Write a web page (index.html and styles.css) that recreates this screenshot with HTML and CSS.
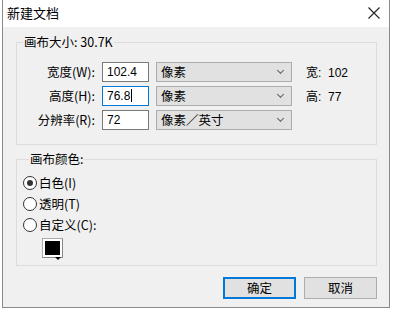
FILE: index.html
```html
<!DOCTYPE html>
<html><head><meta charset="utf-8"><link rel="stylesheet" href="styles.css"></head>
<body>
<div class="win">
  <div class="titlebar">
    <span class="title">新建文档</span>
    <svg class="close" width="12" height="12" viewBox="0 0 12 12"><path d="M0.5 0.5L11.5 11.5M11.5 0.5L0.5 11.5" stroke="#222" stroke-width="1.1" fill="none"/></svg>
  </div>
  <div class="client">
    <fieldset class="group g1">
      <legend>画布大小: 30.7K</legend>
      <div class="row">
        <span class="lbl">宽度(W):</span>
        <span class="inp">102.4</span>
        <span class="sel">像素<i class="chev"></i></span>
        <span class="info">宽:&nbsp; 102</span>
      </div>
      <div class="row">
        <span class="lbl">高度(H):</span>
        <span class="inp focus">76.8<b class="caret"></b></span>
        <span class="sel">像素<i class="chev"></i></span>
        <span class="info">高:&nbsp; 77</span>
      </div>
      <div class="row r3">
        <span class="lbl">分辨率(R):</span>
        <span class="inp">72</span>
        <span class="sel">像素／英寸<i class="chev"></i></span>
      </div>
    </fieldset>
    <fieldset class="group g2">
      <legend>画布颜色:</legend>
      <div class="radio first"><span class="dot on"></span>白色(I)</div>
      <div class="radio"><span class="dot"></span>透明(T)</div>
      <div class="radio"><span class="dot"></span>自定义(C):</div>
      <div class="swatch"><span class="fill"></span><span class="tri"></span></div>
    </fieldset>
    <div class="buttons">
      <span class="btn def">确定</span>
      <span class="btn">取消</span>
    </div>
  </div>
</div>
</body></html>
```
FILE: styles.css
```css
html,body{margin:0;padding:0;background:#fff;}
body{font-family:"Microsoft YaHei","Noto Sans CJK SC","Noto Sans",sans-serif;font-size:12px;color:#000;}
.win{margin-left:2px;width:388px;height:308px;border:1px solid #8a8a8a;border-top:none;box-sizing:border-box;display:flex;flex-direction:column;background:#f0f0f0;}
.titlebar{height:27px;background:#fff;display:flex;align-items:center;justify-content:space-between;padding:0 9px 0 4px;flex:none;}
.title{font-size:13px;margin-top:-2px;}
.close{margin-top:-2px;}
.client{flex:1;padding:0 12px 0 13px;display:flex;flex-direction:column;}
.group{border:1px solid #dcdcdc;margin:0;padding:0;box-sizing:border-box;}
.g1{margin-top:8px;height:110px;padding-top:12px;}
.g2{margin-top:7px;height:114px;padding:0 0 0 6px;}
legend{padding:0 1px;margin-left:6px;font-size:12.5px;line-height:14px;}
.row{display:flex;align-items:center;height:21px;margin-bottom:3px;}
.r3{margin-top:3px;}
.lbl{width:85px;text-align:right;padding-right:7px;box-sizing:border-box;font-size:12.5px;}
.inp{width:47px;height:20px;border:1px solid #7a7a7a;background:#fff;box-sizing:border-box;padding-left:4px;line-height:18px;font-family:"Liberation Sans","Noto Sans CJK SC",sans-serif;font-size:12px;position:relative;}
.inp.focus{border-color:#0078d7;}
.caret{display:inline-block;width:1px;height:13px;background:#000;vertical-align:-2px;margin-left:1px;}
.sel{margin-left:7px;width:136px;height:20px;border:1px solid #adadad;background:#e1e1e1;box-sizing:border-box;padding-left:4px;line-height:18px;position:relative;font-size:12.5px;}
.chev{position:absolute;right:8px;top:5px;width:4px;height:4px;border-right:1px solid #606060;border-bottom:1px solid #606060;transform:rotate(45deg);}
.info{margin-left:14px;font-size:12px;font-family:"Liberation Sans","Noto Sans CJK SC",sans-serif;}
.radio{display:flex;align-items:center;height:21px;font-size:12.5px;}
.radio.first{margin-top:6px;}
.dot{width:14px;height:14px;border:1px solid #333;border-radius:50%;box-sizing:border-box;background:#fff;margin-right:2px;position:relative;}
.dot.on::after{content:"";position:absolute;left:3px;top:3px;width:6px;height:6px;border-radius:50%;background:#333;}
.swatch{margin:3px 0 0 19px;width:21px;height:20px;border:1px solid #aaa;border-right-color:#888;border-bottom-color:#888;background:#fff;box-sizing:border-box;position:relative;}
.fill{position:absolute;left:2px;top:2px;right:2px;bottom:2px;background:#000;}
.tri{position:absolute;right:1px;bottom:-3px;border-left:3px solid transparent;border-right:3px solid transparent;border-top:3px solid #000;}
.buttons{display:flex;justify-content:flex-end;gap:8px;margin-top:11px;}
.btn{width:73px;height:22px;border:1px solid #adadad;background:#e1e1e1;box-sizing:border-box;text-align:center;line-height:20px;font-size:12.5px;}
.btn.def{border:2px solid #0078d7;line-height:18px;}
```
